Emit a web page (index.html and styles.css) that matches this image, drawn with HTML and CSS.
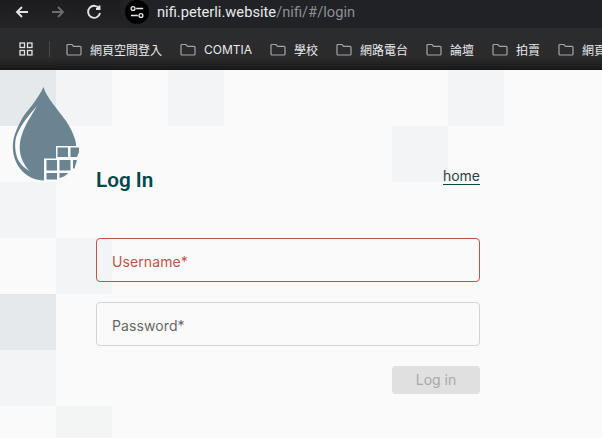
FILE: index.html
```html
<!DOCTYPE html>
<html lang="zh-Hant">
<head>
<meta charset="utf-8">
<title>NiFi Log In</title>
<link rel="stylesheet" href="styles.css">
</head>
<body>
<header class="browser">
  <div class="toolbar">
    <svg class="nav-icon" viewBox="0 0 16 16"><path d="M14 8H3M8 3 3 8l5 5"/></svg>
    <svg class="nav-icon nav-off" viewBox="0 0 16 16"><path d="M2 8h11M8 3l5 5-5 5"/></svg>
    <svg class="nav-icon" viewBox="0 0 16 16"><path d="M13.500 1.500v3.500H10M13.300 4.800A6 6 0 1 0 14 9"/></svg>
    <div class="omnibox">
      <span class="site-badge"><svg viewBox="0 0 16 16"><path d="M7 4h8M1 12h8"/><circle cx="3.500" cy="4" r="2.200"/><circle cx="12.500" cy="12" r="2.200"/></svg></span>
      <span class="url"><span class="host">nifi.peterli.website</span>/nifi/#/login</span>
    </div>
  </div>
  <div class="bookmarks">
    <svg class="apps" viewBox="0 0 14 14"><rect x="1" y="1" width="4.500" height="4.500"/><rect x="8.500" y="1" width="4.500" height="4.500"/><rect x="1" y="8.500" width="4.500" height="4.500"/><rect x="8.500" y="8.500" width="4.500" height="4.500"/></svg>
    <span class="divider"></span>
    <span class="bookmark"><svg class="folder" viewBox="0 0 16 13"><path d="M1 2.500a1 1 0 0 1 1-1h4l1.500 1.800H14a1 1 0 0 1 1 1V11a1 1 0 0 1-1 1H2a1 1 0 0 1-1-1z"/></svg>網頁空間登入</span>
    <span class="bookmark"><svg class="folder" viewBox="0 0 16 13"><path d="M1 2.500a1 1 0 0 1 1-1h4l1.500 1.800H14a1 1 0 0 1 1 1V11a1 1 0 0 1-1 1H2a1 1 0 0 1-1-1z"/></svg>COMTIA</span>
    <span class="bookmark"><svg class="folder" viewBox="0 0 16 13"><path d="M1 2.500a1 1 0 0 1 1-1h4l1.500 1.800H14a1 1 0 0 1 1 1V11a1 1 0 0 1-1 1H2a1 1 0 0 1-1-1z"/></svg>學校</span>
    <span class="bookmark"><svg class="folder" viewBox="0 0 16 13"><path d="M1 2.500a1 1 0 0 1 1-1h4l1.500 1.800H14a1 1 0 0 1 1 1V11a1 1 0 0 1-1 1H2a1 1 0 0 1-1-1z"/></svg>網路電台</span>
    <span class="bookmark"><svg class="folder" viewBox="0 0 16 13"><path d="M1 2.500a1 1 0 0 1 1-1h4l1.500 1.800H14a1 1 0 0 1 1 1V11a1 1 0 0 1-1 1H2a1 1 0 0 1-1-1z"/></svg>論壇</span>
    <span class="bookmark"><svg class="folder" viewBox="0 0 16 13"><path d="M1 2.500a1 1 0 0 1 1-1h4l1.500 1.800H14a1 1 0 0 1 1 1V11a1 1 0 0 1-1 1H2a1 1 0 0 1-1-1z"/></svg>拍賣</span>
    <span class="bookmark"><svg class="folder" viewBox="0 0 16 13"><path d="M1 2.500a1 1 0 0 1 1-1h4l1.500 1.800H14a1 1 0 0 1 1 1V11a1 1 0 0 1-1 1H2a1 1 0 0 1-1-1z"/></svg>網頁</span>
  </div>
</header>
<main class="page">
  <svg class="logo" viewBox="0 84 84 100">
    <path class="drop" d="M43.500 87C45 93 49 98 53 104C57 109 60 113 63 117C68 123 71 129 73 134C75 138 76.200 143 76.200 147C76.200 165 62 180.500 44 180.500C27 180.500 13 166 12.800 147C12.800 142 13.500 138 15 134C17 128 20 122 23 117C26 112 30 108 33 104C37 98 41 93 43.500 87Z"/>
    <path class="shine" d="M37 106C28 116 20 126 16.500 136C14.500 142 14.800 150 17 157C19 163 23 167 29.500 171C24 165 20.500 158 19.800 150C19 140 23 130 28 121C31 116 34 111 37 106Z"/>
    <path class="grid" d="M56 146H80V159H56ZM44 158.500H80V181H44Z"/>
    <g class="cells">
      <rect x="57.500" y="147.500" width="10.500" height="9.500"/>
      <path d="M70.500 147.500H79V152L77 157H70.500Z"/>
      <rect x="46.500" y="160" width="10.500" height="10.500"/>
      <rect x="59.500" y="160" width="11" height="10.500"/>
      <path d="M73 160H77L74.500 168.500H73Z"/>
      <rect x="46.500" y="173" width="10.500" height="6.500"/>
      <path d="M59.500 173H68.500L64 176.500 59.500 178Z"/>
    </g>
  </svg>
  <section class="login">
    <div class="login-head">
      <h1>Log In</h1>
      <a class="home" href="#">home</a>
    </div>
    <div class="field field-error">Username*</div>
    <div class="field">Password*</div>
    <div class="actions"><button class="submit" type="button" disabled>Log in</button></div>
  </section>
</main>
</body>
</html>
```
FILE: styles.css
```css
* { box-sizing: border-box; }
html, body { margin: 0; height: 100%; overflow: hidden; }
body { width: 602px; height: 438px; display: flex; flex-direction: column; background: #fafafa; font-family: Inter, "Noto Sans CJK TC", sans-serif; }

.browser { height: 70px; flex: none; color: #e8eaed; background: #202124; }
.toolbar { height: 28px; display: flex; align-items: flex-start; padding: 4px 0 0 14px; background: linear-gradient(#1c1c1e, #242426); }
.nav-icon { width: 16px; height: 16px; flex: none; margin-right: 20px; fill: none; stroke: #e3e3e3; stroke-width: 1.900; }
.nav-off { stroke: #6b6c6e; }
.omnibox { margin: -4px 0 0 -2px; height: 28px; width: 484px; display: flex; align-items: center; padding: 0 0 4px 5px; background: #212225; border-radius: 0 0 0 16px; }
.site-badge { width: 24px; height: 24px; border-radius: 50%; background: #000; display: flex; align-items: center; justify-content: center; flex: none; }
.site-badge svg { width: 14px; height: 14px; fill: none; stroke: #e8eaed; stroke-width: 1.500; }
.url { margin-left: 8px; font: 14.700px Roboto, sans-serif; color: #8e9093; white-space: nowrap; }
.host { color: #e8eaed; }

.bookmarks { height: 42px; display: flex; align-items: center; gap: 18px; padding: 0 0 0 19px; background: linear-gradient(#2b2c2e 0, #2b2b2c 70%, #1c1c1d 95%, #151515 100%); white-space: nowrap; overflow: hidden; font: 12px Inter, "Noto Sans CJK TC", sans-serif; }
.apps { width: 14px; height: 14px; flex: none; fill: none; stroke: #e3e3e3; stroke-width: 1.300; }
.divider { width: 1px; height: 16px; background: #48494b; margin-left: -2px; margin-right: -2px; flex: none; }
.bookmark { display: flex; align-items: center; flex: none; }
.folder { width: 16px; height: 13px; margin-right: 8px; flex: none; fill: none; stroke: #a4a5a7; stroke-width: 1.200; }

.page {
  flex: 1; position: relative; background-color: #fafafa; padding: 0 122px 0 96px;
  background-repeat: no-repeat;
  background-image:
    linear-gradient(#e6e9ec, #e6e9ec), linear-gradient(#f2f4f6, #f2f4f6), linear-gradient(#f2f4f6, #f2f4f6), linear-gradient(#f2f4f6, #f2f4f6),
    linear-gradient(#f2f4f6, #f2f4f6), linear-gradient(#f2f4f6, #f2f4f6), linear-gradient(#f2f4f6, #f2f4f6), linear-gradient(#e6e9ec, #e6e9ec),
    linear-gradient(#f2f4f6, #f2f4f6), linear-gradient(#f3f5f4, #f3f5f4);
  background-size: 56px 56px;
  background-position: 0 0, 56px 0, 168px 0, 448px 0, 392px 56px, 0 112px, 56px 168px, 0 224px, 0 280px, 56px 336px;
}
.logo { position: absolute; left: 0; top: 14px; width: 84px; height: 100px; }
.drop, .cells { fill: #6a8591; }
.shine, .grid { fill: #fafafa; }

.login { display: flex; flex-direction: column; }
.login-head { height: 168px; display: flex; justify-content: space-between; align-items: flex-start; padding-top: 98px; }
h1 { margin: 0; font: 600 20.700px/24px Roboto, sans-serif; color: #004849; }
.home { margin-top: -1px; font-size: 14px; line-height: 17px; color: #2b3f48; text-decoration: none; border-bottom: 1px solid #004849; }
.field { height: 44px; display: flex; align-items: center; padding: 2px 0 0 15px; margin-bottom: 20px; border: 1px solid #d4d4d4; border-radius: 4px; font-size: 14px; letter-spacing: .1px; color: #666; }
.field-error { border-color: #ba554a; color: #ba554a; }
.actions { display: flex; justify-content: flex-end; }
.submit { width: 88px; height: 28px; padding: 0 0 2px; border: 0; border-radius: 4px; background: #e0e0e0; color: #a8a8a8; font: 14px Inter, sans-serif; }
```
